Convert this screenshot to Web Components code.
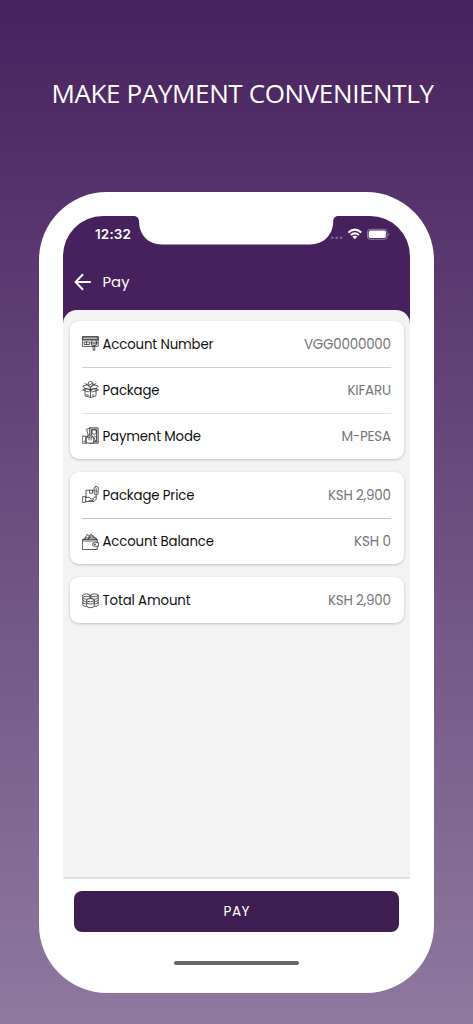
<!DOCTYPE html>
<html lang="en">
<head>
<meta charset="utf-8">
<title>Make payment conveniently</title>
<style>
html,body{margin:0;height:100%;overflow:hidden}
body{font-family:Poppins,Inter,"Open Sans",sans-serif}
</style>
</head>
<body>
<pay-promo></pay-promo>
<script>
const define = (name, html, ready) => customElements.define(name, class extends HTMLElement {
  connectedCallback() {
    if (this.shadowRoot) return;
    this.attachShadow({mode: 'open'}).innerHTML = html;
    if (ready) ready(this);
  }
});

/* Text set to a fixed measure: spacing between letters is spread to fill it. */
define('fit-text', `<style>:host{display:inline-block;white-space:nowrap}span{display:inline-block}</style><span><slot></slot></span>`, el => {
  const span = el.shadowRoot.querySelector('span');
  const w = +el.getAttribute('w'), n = el.textContent.length;
  const gap = (w - span.getBoundingClientRect().width) / (n - 1);
  span.style.letterSpacing = gap + 'px';
  span.style.marginRight = -gap + 'px';
});

const ICONS = {
  account: `<path fill="#bbb" d="M.8 1.8h15.4v3H.8z"/><path d="M.8 1.8h15.4v9.6H.8zM.8 4.8h15.4M2.5 7h5v2.5h-5zM4.5 7v2.5"/><circle cx="12" cy="7.8" r="3" fill="#fff"/><path d="M9.2 7.2h5.6M9.4 8.8h5.2M11.2 10.8v4.4h1.6v-4.4"/>`,
  package: `<path d="M3 7.5v7.3l5.7 1.7 5.3-1.7V7.5M8.5 7v9.5M3 7.5l5.5 1 5.5-1M3 7.5L.7 5l4.8-1.3L8.5 7l3-3.3L16.3 5 14 7.5M.8 8.8L3 7.5l5.5 1-1.6 2.2zM16.2 8.8L14 7.5l-5.5 1 1.6 2.2zM5.5 4L3 2.5M11.5 4L14 2.5"/><circle cx="8.5" cy="3" r="2.5"/><path d="M7.3 3l1 1 1.8-1.8M4.5 13.8l2 .6M11 13.5v1.5"/>`,
  mode: `<path fill="#ccc" d="M8 .8h8.2v15.4H8z"/><path fill="#fff" d="M10 2.5h4.5v12H10z"/><path d="M8 1.2L4.6 2.2l1.6 6"/><circle cx="12.2" cy="5" r="2.3"/><path fill="#fff" d="M.7 9.2h3.5v7H.7zM4.2 10h7.5v6H4.2zM5.5 10V8.5l4-.5 3.5 4"/><path d="M7 10v3M9.2 10v3M2 14.2h1M12 12.5l3 2M12.5 9l2 1.5"/>`,
  price: `<path d="M4 11V4.2h8M7.5 4.2v3h3v-3M12 11.2h2.2V8.6"/><rect x="12.2" y=".6" width="4" height="8" rx="1.6"/><path d="M14.2 2.5v1M14.2 4.5v2.7M13.5 5h1.5M.7 10.7h3v5.6h-3zM3.7 11.4h3.5l1.8 1.5h3l-1 1.5H7M3.7 15.5h8.5l2-2.3v-2"/>`,
  wallet: `<path d="M.8 6.5h14.4v10H.8zM.8 6.5L3 5h11l1.2 1.5M3 6l2-4.5 2.5 1L6 6M6.5 5.8L9 .8l5 5M8 5l1.7-2.5L12 5M1 8h14"/><path fill="#fff" d="M16.2 9.7h-4a1.7 1.7 0 0 0 0 3.5h4z"/><circle cx="12.7" cy="11.4" r=".5"/>`,
  coins: `<path fill="#fff" d="M.8 3.3v9.4c0 2.4 7.4 2.4 7.4 0V3.3M8.8 3.3v9.4c0 2.4 7.4 2.4 7.4 0V3.3"/><path d="M.8 5.6c0 2.2 7.4 2.2 7.4 0M.8 8c0 2.2 7.4 2.2 7.4 0M.8 10.4c0 2.2 7.4 2.2 7.4 0M8.8 5.6c0 2.2 7.4 2.2 7.4 0M8.8 8c0 2.2 7.4 2.2 7.4 0M8.8 10.4c0 2.2 7.4 2.2 7.4 0"/><ellipse cx="4.5" cy="3.3" rx="3.7" ry="1.4" fill="#fff"/><ellipse cx="12.5" cy="3.3" rx="3.7" ry="1.4" fill="#fff"/><path fill="#fff" d="M4.7 8.2v5.5c0 2.6 7.6 2.6 7.6 0V8.2"/><ellipse cx="8.5" cy="8.2" rx="3.8" ry="1.6" fill="#fff"/><path d="M4.7 10.5c0 2.2 7.6 2.2 7.6 0"/>`
};

define('line-icon', `<style>:host{display:block;width:17px;height:17px;flex:none;margin-top:-1px}svg{display:block;fill:none;stroke:#333;stroke-width:.8;stroke-linejoin:round;stroke-linecap:round}</style><svg width="17" height="17" viewBox="0 0 17 17"></svg>`, el => {
  el.shadowRoot.querySelector('svg').innerHTML = ICONS[el.getAttribute('name')];
});

define('info-card', `<style>:host{display:flex;flex-direction:column;box-sizing:border-box;background:#fff;border-radius:9px;padding:0 12.5px;box-shadow:0 1px 3px rgba(0,0,0,.2)}</style><slot></slot>`);

define('status-bar', `<style>
:host{display:flex;height:36px;margin-bottom:2px;box-sizing:border-box;padding:0 15px 0 32px;align-items:center;color:#fff;justify-content:space-between}
.t{font:600 13.5px/18px Inter,sans-serif}
svg{display:block}
</style><div class="t"><fit-text w="36">12:32</fit-text></div>
<svg width="64" height="14" viewBox="0 0 64 14" fill="#fff"><g opacity=".3"><circle cx="1.4" cy="10.8" r="1.4"/><circle cx="5.8" cy="10.8" r="1.4"/><circle cx="10.2" cy="10.8" r="1.4"/></g>
<g fill="none" stroke="#fff" stroke-width="2"><path d="M17.3 5.4q6.5-5.6 13 0"/><path d="M19.7 8.1q4.1-3.5 8.2 0"/></g><path d="M21.3 9.6q2.5-1.9 5 0l-2.5 2.6z"/>
<rect x="36.5" y="2.3" width="19.6" height="10" rx="2.6" fill="none" stroke="#fff" stroke-opacity=".4"/><rect x="37.7" y="3.5" width="17.2" height="7.6" rx="1.6"/><path d="M57.4 5.7q2 1.6 0 3.2z" opacity=".5"/></svg>`);

define('app-header', `<style>
:host{display:flex;align-items:center;height:56px;padding-left:11px;color:#fff;gap:11.5px;font-size:14.8px;line-height:20px}
svg{display:block}</style>
<svg width="17" height="18" viewBox="0 0 17 18" fill="none" stroke="#fff" stroke-width="2"><path d="M16.8 9H2M9 1.3L1.6 9 9 16.7"/></svg><fit-text w="27">Pay</fit-text>`);

define('phone-frame', `<style>
:host{display:block;position:relative;width:395px;height:801px;box-sizing:border-box;padding:24px 24px 0;background:#fff;border-radius:68px}
.screen{width:347px;height:661px;background:#46215d;border-radius:40px 40px 0 0;overflow:hidden;display:flex;flex-direction:column}
.notch{position:absolute;left:94px;top:23px}
</style><div class="screen"><slot></slot></div>
<svg class="notch" width="206" height="30" viewBox="0 0 206 30"><path fill="#fff" d="M0 0V1C4 1 5.6 2.5 6 6C6.2 19 14 29.4 29 29.4H177C192 29.4 200 19 200.3 6C200.6 2.5 202 1 206 1V0Z"/></svg>
<slot name="footer"></slot>`);

define('pay-footer', `<style>
:host{display:flex;flex-direction:column;align-items:center;border-top:2px solid #e2e2e2;width:347px}
button{all:unset;box-sizing:border-box;width:325px;height:41px;margin-top:12px;border-radius:8px;background:#3e1d53;color:#fff;text-align:center;font-size:13.6px;line-height:41px}
.home{width:125px;height:4px;border-radius:2px;background:#666;margin-top:29px}
</style><button><fit-text w="26">PAY</fit-text></button><div class="home"></div>`);

/* icon, label, label width, value, value width, divider colour */
const ROWS = [
  [['account','Account Number',111,'VGG0000000',87],['package','Package',57,'KIFARU',43.5,'#d0d0d0'],['mode','Payment Mode',98.5,'M-PESA',49.5,'#e4e4e4']],
  [['price','Package Price',92,'KSH 2,900',63],['wallet','Account Balance',111.5,'KSH 0',37,'#c4c4c4']],
  [['coins','Total Amount',88,'KSH 2,900',63]]
];

customElements.define('pay-row', class extends HTMLElement {
  connectedCallback() {
    if (this.shadowRoot) return;
    const [icon, label, lw, value, vw, rule = 'transparent'] = this.data;
    this.attachShadow({mode: 'open'}).innerHTML = `<style>
:host{display:flex;align-items:center;height:46.2px;box-sizing:border-box;border-top:1px solid ${rule};color:#111;font-size:13.3px;line-height:18px}
.l{flex:1;margin:1px 0 0 3.5px}
.v{color:#757575;margin-top:1px;font-size:13.5px}
</style><line-icon name="${icon}"></line-icon><div class="l"><fit-text w="${lw}">${label}</fit-text></div><div class="v"><fit-text w="${vw}">${value}</fit-text></div>`;
  }
});

define('pay-content', `<style>
:host{display:flex;flex-direction:column;gap:12.8px;flex:1;background:#f3f3f3;border-radius:14px 14px 0 0;padding:10.5px 6.5px 0}
</style>`, el => {
  for (const rows of ROWS) {
    const card = document.createElement('info-card');
    for (const r of rows) { const row = document.createElement('pay-row'); row.data = r; card.append(row); }
    el.shadowRoot.append(card);
  }
});

define('pay-promo', `<style>
:host{display:flex;flex-direction:column;width:473px;height:1024px;background:linear-gradient(#48225f,#8f799f)}
h1{margin:0;height:192px;box-sizing:border-box;padding:75px 0 0 51.5px;font:400 26px/36px "Open Sans",sans-serif;color:#fff}
phone-frame{margin-left:39px}
</style><h1><fit-text w="382.5">MAKE PAYMENT CONVENIENTLY</fit-text></h1>
<phone-frame><status-bar></status-bar><app-header></app-header><pay-content></pay-content><pay-footer slot="footer"></pay-footer></phone-frame>`);
</script>
</body>
</html>
